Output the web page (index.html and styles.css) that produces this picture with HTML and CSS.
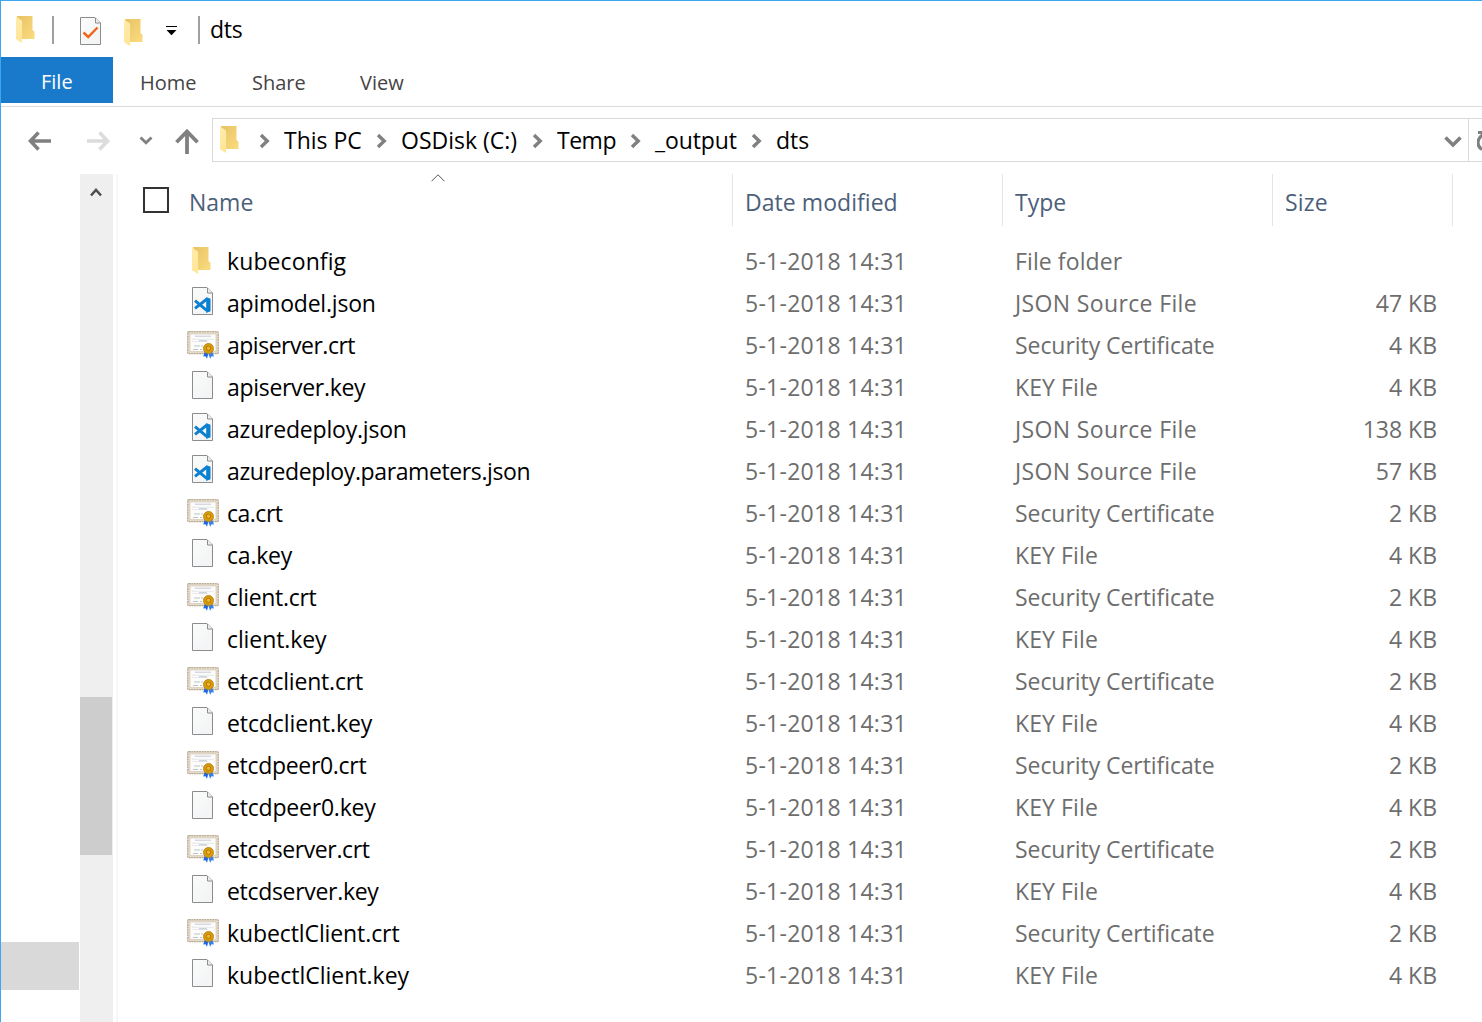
FILE: index.html
```html
<!DOCTYPE html>
<html lang="en">
<head>
<meta charset="utf-8">
<title>dts</title>
<link rel="stylesheet" href="styles.css">
</head>
<body>
<svg class="defs" width="0" height="0" aria-hidden="true">
  <defs>
    <linearGradient id="gBack" x1="0" y1="0" x2="1" y2="1"><stop offset="0" stop-color="#e8c263"/><stop offset="1" stop-color="#fadc80"/></linearGradient>
    <linearGradient id="gFront" x1="0" y1="0" x2="0" y2="1"><stop offset="0" stop-color="#ffecac"/><stop offset="1" stop-color="#ffe596"/></linearGradient>
    <linearGradient id="gPage" x1="0" y1="0" x2="1" y2="1"><stop offset="0" stop-color="#fbfbfb"/><stop offset="1" stop-color="#f1f3f4"/></linearGradient>
    <symbol id="folder" viewBox="0 0 20 28"><path d="M1 0H16.500V14l2 1.800V23H5z" fill="url(#gBack)"/><path d="M0 .5l5.200 3.500c.6.5.9 1 .9 2V27L1.200 24C.4 23.500 0 23 0 22z" fill="url(#gFront)"/></symbol>
    <symbol id="page" viewBox="0 0 22 28"><path d="M.5.5h14.500l5.500 5.500v21.500H.5z" fill="url(#gPage)" stroke="#8c8c8c"/><path d="M15.500 1v5h5" fill="#eee" stroke="#8c8c8c"/></symbol>
    <symbol id="code" viewBox="0 0 22 28"><use href="#page" width="22" height="28"/><path d="M14.200 10l4.300 1.700v12.600L14.200 26z" fill="#0b7fd0"/><path d="M3 13.700L15 23.700M3 21.300L15 12" fill="none" stroke="#0b7fd0" stroke-width="2.900"/></symbol>
    <symbol id="check" viewBox="0 0 22 28"><use href="#page" width="22" height="28"/><path d="M3.500 15.500l4.700 4.500L17.500 10.500" fill="none" stroke="#f26419" stroke-width="2.500"/></symbol>
    <symbol id="cert" viewBox="0 0 32 28"><rect x=".7" y=".7" width="30.600" height="22" rx="1" fill="#e4dbc9" stroke="#b9aa94" stroke-width="1.200" stroke-dasharray="2 .6"/><rect x="3" y="3" width="26" height="17.500" fill="#fcfcfb" stroke="#d3c9b8" stroke-width=".7"/><path d="M8 5.200h16" stroke="#c3c9d4"/><path d="M5 8.300h22M5 10.500h16" stroke="#e2e5ea" stroke-width=".8"/><path d="M12 9.800h8M7 15h6m1 0h2M6 18.500h5m2 0h2" stroke="#bcc2ce"/><path d="M18 20l-1.800 5.500 2.300-.3L20 27.700l1.600-6z" fill="#2469d9"/><path d="M25 20l2 5.500-2.400-.3-1.500 2.500-2-6z" fill="#397fea"/><circle cx="21.500" cy="17.500" r="5" fill="#d79b0c" stroke="#c08a18"/><circle cx="21.500" cy="17.300" r="2.200" fill="#edb72b" stroke="#a87009" stroke-width=".8"/></symbol>
    <symbol id="crumb" viewBox="0 0 12 16"><path d="M2 2l6.200 6L2 14" fill="none" stroke="#808080" stroke-width="3.400"/></symbol>
  </defs>
</svg>
<div class="window">
  <header class="titlebar">
    <svg class="i-folder"><use href="#folder"/></svg>
    <span class="bar"></span>
    <svg class="i-check"><use href="#check"/></svg>
    <svg class="i-folder low"><use href="#folder"/></svg>
    <svg class="i-drop" viewBox="0 0 11 10"><path d="M0 .5h11" stroke="#000"/><path d="M.5 4h10L5.500 9.200z"/></svg>
    <span class="bar"></span>
    <h1>dts</h1>
  </header>
  <nav class="tabs"><a class="file">File</a><a class="home">Home</a><a class="share">Share</a><a class="view">View</a></nav>
  <div class="address-row">
    <svg class="i-back" viewBox="0 0 24 20"><path d="M1.500 10H23M10.500 1.500L2.500 10l8 8.500" fill="none" stroke="#808080" stroke-width="3.600"/></svg>
    <svg class="i-fwd" viewBox="0 0 24 20"><path d="M1 10h21.500M13.500 1.500l8 8.500-8 8.500" fill="none" stroke="#dcdcdc" stroke-width="3.600"/></svg>
    <svg class="i-recent" viewBox="0 0 14 10"><path d="M1.500 1.500L7 6.700l5.500-5.200" fill="none" stroke="#808080" stroke-width="2.800"/></svg>
    <svg class="i-up" viewBox="0 0 24 26"><path d="M12 25V3M1.500 13.300L12 2.500l10.500 10.800" fill="none" stroke="#808080" stroke-width="3.800"/></svg>
    <div class="address">
      <svg class="i-folder"><use href="#folder"/></svg>
      <svg class="crumb c1"><use href="#crumb"/></svg><span class="p1">This PC</span>
      <svg class="crumb"><use href="#crumb"/></svg><span class="p2">OSDisk (C:)</span>
      <svg class="crumb"><use href="#crumb"/></svg><span class="p3">Temp</span>
      <svg class="crumb"><use href="#crumb"/></svg><span class="p4">_output</span>
      <svg class="crumb"><use href="#crumb"/></svg><span class="p5">dts</span>
      <svg class="i-history" viewBox="0 0 18 12"><path d="M1.500 1.500L9 9l7.500-7.500" fill="none" stroke="#808080" stroke-width="3.600"/></svg>
      <div class="refresh"><svg viewBox="0 0 20 24"><path d="M1 3.500h7v6" fill="none" stroke="#808080" stroke-width="3"/><path d="M6 5.500C-.5 10-.5 17 5 20.500" fill="none" stroke="#808080" stroke-width="3.200"/></svg></div>
    </div>
  </div>
  <div class="content">
    <aside class="tree"><div class="selected"></div></aside>
    <div class="scrollbar"><svg viewBox="0 0 12 10"><path d="M1 8.500l5-5.500 5 5.500" fill="none" stroke="#505050" stroke-width="2.600"/></svg><div class="thumb"></div></div>
    <main>
      <div class="head">
        <div class="name"><span class="box"></span><span>Name</span><svg class="sort" viewBox="0 0 14 8"><path d="M.5 7.300L7 .8l6.500 6.500" fill="none" stroke="#555"/></svg></div>
        <div class="date">Date modified</div><div class="type">Type</div><div class="size">Size</div>
      </div>
      <div class="rows">
        <div class="row"><svg class="folder"><use href="#folder"/></svg><span class="n wide">kubeconfig</span><span class="d">5-1-2018 14:31</span><span class="t ff">File folder</span><span class="s"></span></div>
        <div class="row"><svg class="code"><use href="#code"/></svg><span class="n t2">apimodel.json</span><span class="d">5-1-2018 14:31</span><span class="t js">JSON Source File</span><span class="s">47 KB</span></div>
        <div class="row"><svg class="cert"><use href="#cert"/></svg><span class="n t5">apiserver.crt</span><span class="d">5-1-2018 14:31</span><span class="t sc">Security Certificate</span><span class="s">4 KB</span></div>
        <div class="row"><svg class="page"><use href="#page"/></svg><span class="n t3">apiserver.key</span><span class="d">5-1-2018 14:31</span><span class="t kf">KEY File</span><span class="s">4 KB</span></div>
        <div class="row"><svg class="code"><use href="#code"/></svg><span class="n t2">azuredeploy.json</span><span class="d">5-1-2018 14:31</span><span class="t js">JSON Source File</span><span class="s">138 KB</span></div>
        <div class="row"><svg class="code"><use href="#code"/></svg><span class="n t4">azuredeploy.parameters.json</span><span class="d">5-1-2018 14:31</span><span class="t js">JSON Source File</span><span class="s">57 KB</span></div>
        <div class="row"><svg class="cert"><use href="#cert"/></svg><span class="n t5">ca.crt</span><span class="d">5-1-2018 14:31</span><span class="t sc">Security Certificate</span><span class="s">2 KB</span></div>
        <div class="row"><svg class="page"><use href="#page"/></svg><span class="n t2">ca.key</span><span class="d">5-1-2018 14:31</span><span class="t kf">KEY File</span><span class="s">4 KB</span></div>
        <div class="row"><svg class="cert"><use href="#cert"/></svg><span class="n t3">client.crt</span><span class="d">5-1-2018 14:31</span><span class="t sc">Security Certificate</span><span class="s">2 KB</span></div>
        <div class="row"><svg class="page"><use href="#page"/></svg><span class="n t1">client.key</span><span class="d">5-1-2018 14:31</span><span class="t kf">KEY File</span><span class="s">4 KB</span></div>
        <div class="row"><svg class="cert"><use href="#cert"/></svg><span class="n t2">etcdclient.crt</span><span class="d">5-1-2018 14:31</span><span class="t sc">Security Certificate</span><span class="s">2 KB</span></div>
        <div class="row"><svg class="page"><use href="#page"/></svg><span class="n t1">etcdclient.key</span><span class="d">5-1-2018 14:31</span><span class="t kf">KEY File</span><span class="s">4 KB</span></div>
        <div class="row"><svg class="cert"><use href="#cert"/></svg><span class="n t3">etcdpeer0.crt</span><span class="d">5-1-2018 14:31</span><span class="t sc">Security Certificate</span><span class="s">2 KB</span></div>
        <div class="row"><svg class="page"><use href="#page"/></svg><span class="n t2">etcdpeer0.key</span><span class="d">5-1-2018 14:31</span><span class="t kf">KEY File</span><span class="s">4 KB</span></div>
        <div class="row"><svg class="cert"><use href="#cert"/></svg><span class="n t4">etcdserver.crt</span><span class="d">5-1-2018 14:31</span><span class="t sc">Security Certificate</span><span class="s">2 KB</span></div>
        <div class="row"><svg class="page"><use href="#page"/></svg><span class="n t3">etcdserver.key</span><span class="d">5-1-2018 14:31</span><span class="t kf">KEY File</span><span class="s">4 KB</span></div>
        <div class="row"><svg class="cert"><use href="#cert"/></svg><span class="n t1">kubectlClient.crt</span><span class="d">5-1-2018 14:31</span><span class="t sc">Security Certificate</span><span class="s">2 KB</span></div>
        <div class="row"><svg class="page"><use href="#page"/></svg><span class="n">kubectlClient.key</span><span class="d">5-1-2018 14:31</span><span class="t kf">KEY File</span><span class="s">4 KB</span></div>
      </div>
    </main>
  </div>
</div>
</body>
</html>
```
FILE: styles.css
```css
* { box-sizing: border-box; }
body { margin: 0; overflow: hidden; background: #fff; font-family: "Open Sans", "Noto Sans", sans-serif; font-size: 23px; color: #000; }
svg { display: block; flex: none; }
.defs { position: absolute; }
.window { width: 1482px; height: 1022px; border-left: 1px solid #3aa7ee; border-top: 1px solid #3aa7ee; overflow: hidden; display: flex; flex-direction: column; }

.titlebar { height: 56px; flex: none; display: flex; align-items: flex-start; padding: 15px 0 0 15px; }
.i-folder { width: 20px; height: 28px; }
.i-folder.low { margin: 3px 0 0 22px; }
.bar { width: 2px; height: 28px; margin-left: 16px; background: #a0a0a0; }
.i-check { width: 22px; height: 28px; margin: 1px 0 0 26px; }
.i-drop { width: 11px; height: 10px; margin: 10px 0 0 22px; }
.i-drop + .bar { margin-left: 21px; }
h1 { margin: 0 0 0 10px; font-size: 23px; font-weight: 400; line-height: 26px; letter-spacing: -0.2px; }

.tabs { height: 50px; flex: none; display: flex; border-bottom: 1px solid #dadbdc; font-size: 20px; line-height: 52px; color: #444; }
.tabs .file { width: 112px; height: 46px; line-height: 50px; background: #1979ca; color: #fff; padding-left: 40px; }
.home { width: 112px; padding-left: 27px; }
.share { width: 108px; padding-left: 27px; }
.view { padding-left: 27px; }

.address-row { height: 67px; flex: none; display: flex; align-items: flex-start; padding: 11px 0 0 27px; }
.i-back { width: 24px; height: 20px; margin-top: 13px; }
.i-fwd { width: 24px; height: 20px; margin: 13px 0 0 34px; }
.i-recent { width: 14px; height: 10px; margin: 18px 0 0 29px; }
.i-up { width: 24px; height: 26px; margin: 11px 0 0 22px; }
.address { height: 44px; flex: 1; margin-left: 13px; border: 1px solid #d9d9d9; border-right: 0; display: flex; align-items: center; padding-left: 7px; line-height: 42px; }
.address .i-folder { margin-top: 0; }
.address span { white-space: nowrap; flex: none; margin-left: 13px; }
.crumb { width: 12px; height: 16px; margin-top: 1px; }
.crumb.c1 { margin-left: 19px; }
.p1 { width: 92px; }
.p2 { width: 131px; }
.p3 { width: 73px; letter-spacing: -0.5px; }
.p4 { width: 96px; letter-spacing: -0.1px; }
.i-history { width: 18px; height: 12px; margin: 3px 6px 0 auto; }
.refresh { width: 14px; height: 42px; border-left: 1px solid #d9d9d9; overflow: hidden; padding: 10px 0 0 8px; }
.refresh svg { width: 20px; height: 24px; }

.content { flex: 1; display: flex; min-height: 0; }
.tree { width: 79px; padding-top: 768px; }
.selected { width: 78px; height: 48px; background: #d9d9d9; }
.scrollbar { width: 33px; background: #efefef; padding-top: 13px; }
.scrollbar svg { width: 12px; height: 10px; margin-left: 10px; }
.thumb { width: 32px; height: 158px; margin-top: 500px; background: #cdcdcd; }
main { flex: 1; margin-left: 3px; border-left: 2px solid #f7f7f7; }
.head { display: flex; height: 52px; line-height: 56px; color: #4c607a; }
.head > div { border-right: 1px solid #e5e5e5; }
.head .name { width: 615px; display: flex; padding-left: 25px; position: relative; }
.box { width: 26px; height: 26px; border: 2px solid #333; margin: 13px 20px 0 0; }
.sort { position: absolute; left: 313px; top: 0; width: 14px; height: 8px; }
.head .date { width: 270px; padding-left: 12px; letter-spacing: 0.05px; }
.head .type { width: 270px; padding-left: 12px; }
.head .size { width: 180px; padding-left: 12px; letter-spacing: 0.2px; }
.rows { padding-top: 15px; }
.row { display: grid; grid-template-columns: 109px 518px 270px 270px 152px; height: 42px; line-height: 40px; white-space: nowrap; color: #6d6d6d; }
.row .n { color: #000; }
.row .s { text-align: right; }
.row svg { width: 22px; height: 28px; margin: 4px 0 0 74px; }
.row svg.folder { width: 20px; margin-top: 6px; }
.row svg.cert { width: 32px; margin: 6px 0 0 69px; }

/* tracking */
.wide { letter-spacing: 0.1px; }
.t1 { letter-spacing: -0.1px; }
.t2 { letter-spacing: -0.2px; }
.t3 { letter-spacing: -0.31px; }
.t4 { letter-spacing: -0.39px; }
.t5 { letter-spacing: -0.49px; }
.d { letter-spacing: 0.26px; }
.ff { letter-spacing: 0.1px; }
.js { letter-spacing: 0.36px; }
.sc { letter-spacing: -0.06px; }
.kf { letter-spacing: 0.1px; }
```
